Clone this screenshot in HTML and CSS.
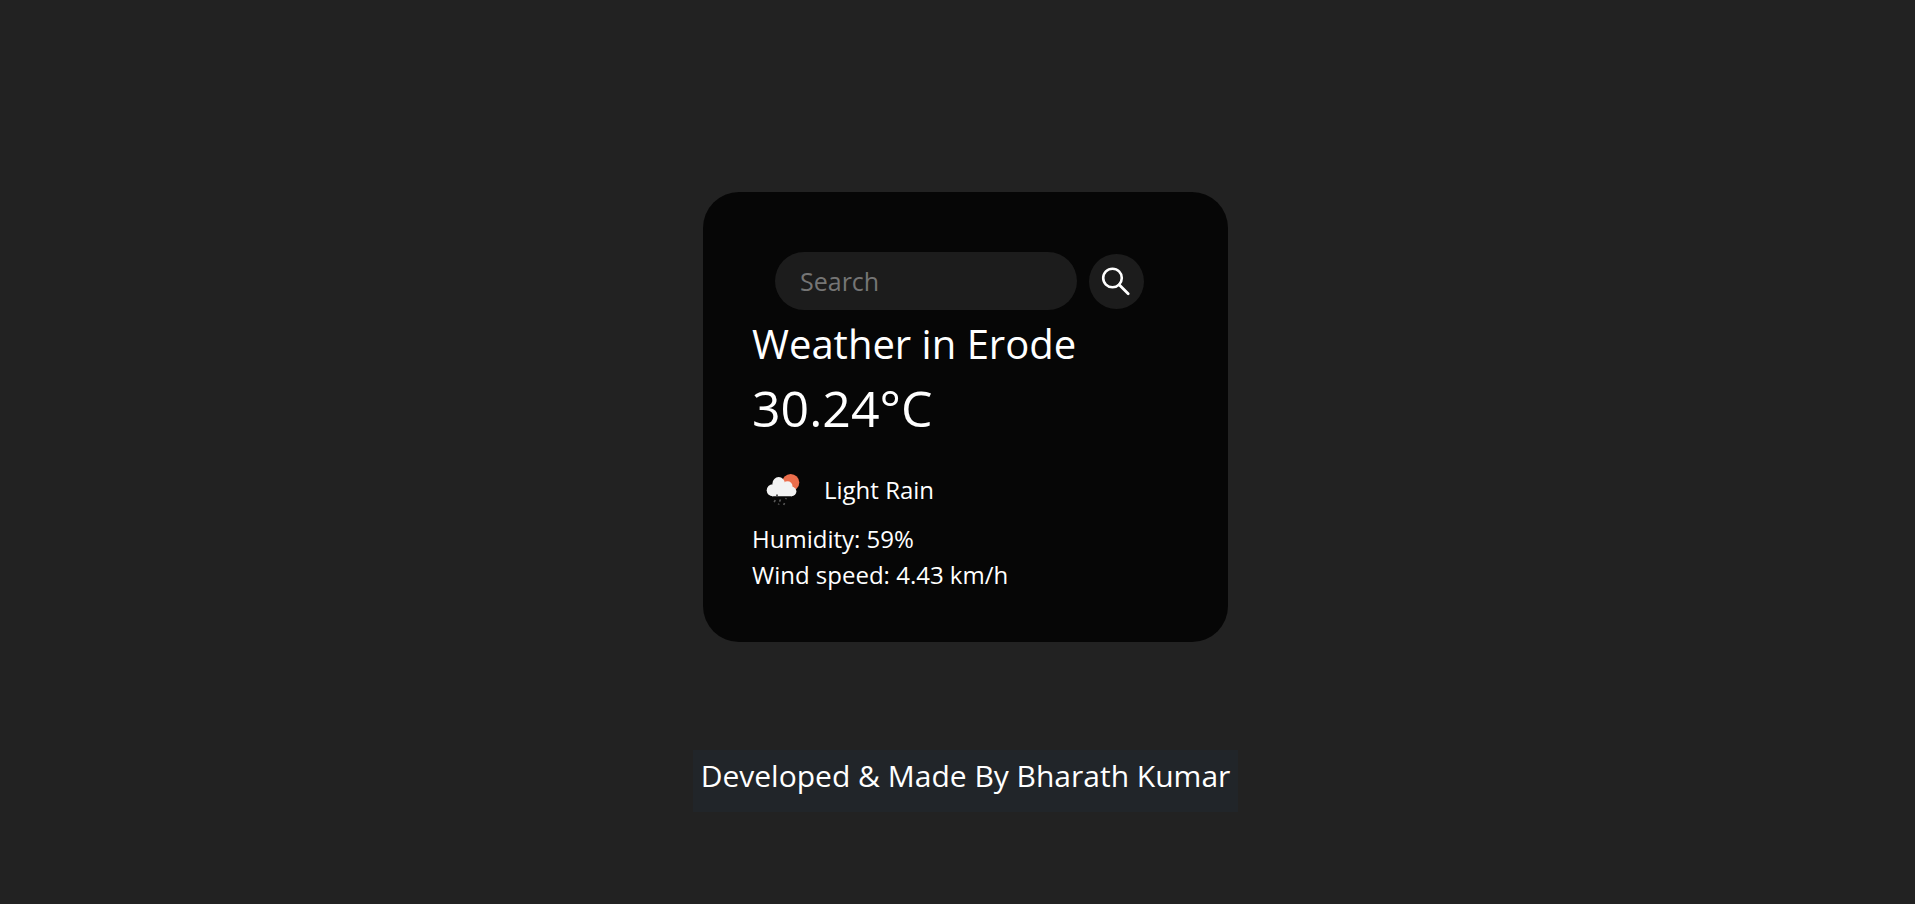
FILE: index.html
```
<!DOCTYPE html>
<html lang="en">
<head>
<meta charset="utf-8">
<title>Weather App</title>
<link rel="stylesheet" href="styles.css">
</head>
<body>
<main class="card">
  <form class="search">
    <input class="search-bar" type="text" placeholder="Search" aria-label="Search">
    <button class="search-button" type="button" aria-label="Search">
      <svg width="36" height="36" viewBox="0 0 36 36" fill="none" stroke="#fff" aria-hidden="true">
        <circle cx="13.5" cy="15" r="9.3" stroke-width="2.6"/>
        <path d="M20.2 21.8 29.200 30.800" stroke-width="2.800" stroke-linecap="round"/>
      </svg>
    </button>
  </form>
  <section class="weather">
    <h2 class="city">Weather in Erode</h2>
    <h1 class="temp">30.24°C</h1>
    <div class="condition">
      <svg class="condition-icon" width="50" height="50" viewBox="0 0 50 50" aria-hidden="true">
        <circle cx="30.700" cy="17.500" r="8.600" fill="#ec6e4c"/>
        <g fill="#f2f2f2">
          <circle cx="12.700" cy="25.200" r="6"/>
          <circle cx="18.700" cy="18.300" r="6.200"/>
          <circle cx="27.500" cy="21.300" r="5"/>
          <circle cx="31.700" cy="26.500" r="4.700"/>
          <path d="M12 20H28L32 31.200H12Z"/>
        </g>
        <path d="M16 30.300h2M15.200 35l-1 2.200M20.500 34.500l-1 2.200M26.300 33.200l-.6 1M18.900 38.700l-.5 1M24.600 38.200l-1 1.700" stroke="#5a5a5a" stroke-width="1.600"/>
      </svg>
      <span>Light Rain</span>
    </div>
    <p class="detail">Humidity: 59%</p>
    <p class="detail">Wind speed: 4.43 km/h</p>
  </section>
</main>
<footer class="credit">Developed &amp; Made By Bharath Kumar</footer>
</body>
</html>
```
FILE: styles.css
```
* { box-sizing: border-box; }

body {
  display: flex;
  flex-direction: column;
  align-items: center;
  min-height: 100vh;
  margin: 0;
  padding: 192px 0 0 16px;
  background: #222;
  color: #fff;
  font-family: "Open Sans", sans-serif;
  font-size: 24px;
  line-height: 36px;
}

.card {
  width: 100%;
  max-width: 525px;
  padding: 60px 49px 49px;
  border-radius: 36px;
  background: #060606;
}

.search {
  display: flex;
  align-items: center;
  justify-content: center;
  gap: 12px;
  padding-right: 12px;
}

.search-bar {
  flex: 0 1 302px;
  min-width: 0;
  height: 58px;
  padding: 0 25px;
  border: 0;
  border-radius: 29px;
  background: #1c1c1c;
  color: #fff;
  font: inherit;
  font-size: 25px;
}

.search-bar::placeholder { color: #757575; }

.search-button {
  display: grid;
  place-items: center;
  width: 55px;
  height: 55px;
  padding: 0;
  border: 0;
  border-radius: 50%;
  background: #1c1c1c;
}

.city, .temp { margin: 0; font-weight: 400; }
.city { padding-top: 8px; font-size: 40px; line-height: 52px; }
.temp { padding-top: 6px; font-size: 50px; line-height: 64px; }

.condition {
  display: flex;
  align-items: center;
  gap: 14px;
  padding: 25px 0 6px 8px;
}

.detail { margin: 0; }

.credit {
  min-height: 62px;
  margin-top: 108px;
  padding: 3px 8px;
  background: #212529;
  font-size: 30px;
  line-height: 45px;
}
```
